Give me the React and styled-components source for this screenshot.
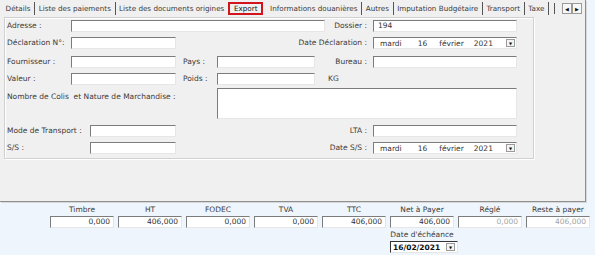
import React from "react";
import styled, { createGlobalStyle } from "styled-components";

const GlobalStyle = createGlobalStyle`
  html, body {
    margin: 0;
    padding: 0;
    background: #eef5fc;
  }
  body {
    font-family: "DejaVu Sans", Verdana, sans-serif;
    font-size: 7.5px;
    color: #3d3a38;
    width: 595px;
    height: 255px;
    overflow: hidden;
  }
`;

const Page = styled.div`
  width: 595px;
  height: 255px;
`;

const Panel = styled.div`
  width: 586px;
  height: 202px;
  box-sizing: border-box;
  background: #f0f0f0;
  border-right: 1px solid #8f8f8f;
  border-bottom: 1px solid #8f8f8f;
  box-shadow: 1px 1px 0 #d8d8d8;
`;

const TabStrip = styled.div`
  display: flex;
  align-items: center;
  height: 17px;
  padding-left: 2px;
  padding-bottom: 1px;
  box-sizing: border-box;
  white-space: nowrap;
  font-size: 7.2px;
`;

const Tab = styled.div`
  flex-shrink: 0;
  height: 13px;
  line-height: ${(p) => (p.$active ? "9px" : "13px")};
  padding: 0 ${(p) => (p.$active ? "4px" : "3.6px")};
  box-sizing: border-box;
  border: ${(p) => (p.$active ? "2px solid #d4141c" : "none")};
  border-right: ${(p) => (p.$active ? "2px solid #d4141c" : p.$last ? "none" : "1px solid #555")};
  margin-right: ${(p) => (p.$active ? "3px" : "0")};
  color: ${(p) => (p.$active ? "#111" : "#3d3a38")};
`;

const Spacer = styled.div`
  flex: 1;
`;

const ArrowGroup = styled.div`
  flex-shrink: 0;
  display: flex;
  align-items: center;
  margin-right: 3px;
  margin-top: 1px;
`;

const CutTab = styled.div`
  width: 6px;
  height: 11px;
  border-left: 1px solid #555;
  margin-right: 1px;
`;

const ArrowBtn = styled.div`
  width: 10px;
  height: 11px;
  box-sizing: border-box;
  border: 1px solid #9a9a9a;
  background: #f7f7f7;
  display: flex;
  align-items: center;
  justify-content: center;
  font-size: 5px;
  color: #111;
`;

const GroupBox = styled.div`
  margin-left: 4px;
  width: 530px;
  height: 142px;
  box-sizing: border-box;
  border: 1px solid #d0d0d0;
  box-shadow: inset 1px 1px 0 #fff, 1px 1px 0 #fff;
  padding: 2px 0 0 2px;
`;

const FormGrid = styled.div`
  display: grid;
  grid-template-columns: 64px 105px 41px 98px 58px 144px;
  grid-template-rows: 17px 19px 17px 15px 37px 17px 12px;
  align-items: start;
`;

const Label = styled.div`
  height: 12px;
  line-height: 12px;
  white-space: nowrap;
  text-align: ${(p) => (p.$right ? "right" : "left")};
  padding-left: ${(p) => p.$pl || 0}px;
  padding-right: ${(p) => (p.$right ? 6 : 0)}px;
  margin-top: ${(p) => p.$mt || 0}px;
  grid-column: ${(p) => p.$col || "auto"};
`;

const Field = styled.div`
  height: ${(p) => p.$h || 12}px;
  width: ${(p) => (p.$w ? `${p.$w}px` : "auto")};
  justify-self: ${(p) => p.$justify || "stretch"};
  box-sizing: border-box;
  background: #fff;
  border-top: 1px solid #7c7c7c;
  border-left: 1px solid #7c7c7c;
  border-right: 1px solid #e6e6e6;
  border-bottom: 1px solid #e6e6e6;
  line-height: 10px;
  padding-left: 4px;
  grid-column: ${(p) => p.$col || "auto"};
  color: #333;
`;

const DateBox = styled.div`
  height: 12px;
  box-sizing: border-box;
  background: #fff;
  border-top: 1px solid #7c7c7c;
  border-left: 1px solid #7c7c7c;
  border-right: 1px solid #e6e6e6;
  border-bottom: 1px solid #e6e6e6;
  display: flex;
  align-items: center;
  padding-left: 6px;
  padding-right: 1px;
  color: #333;
  grid-column: ${(p) => p.$col || "auto"};
`;

const DatePart = styled.span`
  margin-right: ${(p) => p.$gap}px;
`;

const DropBtn = styled.div`
  margin-left: auto;
  width: 9px;
  height: 8px;
  box-sizing: border-box;
  border: 1px solid #9a9a9a;
  background: #f4f4f4;
  display: flex;
  align-items: center;
  justify-content: center;
  font-size: 4px;
  color: #111;
`;

const Summary = styled.div`
  display: grid;
  grid-template-columns: repeat(8, 64px);
  grid-template-rows: 10px 12px 11px 12px;
  column-gap: 4px;
  row-gap: 1px;
  padding-left: 50px;
  margin-top: 3px;
`;

const SumLabel = styled.div`
  text-align: center;
  line-height: 10px;
  white-space: nowrap;
  align-self: end;
  grid-column: ${(p) => p.$col || "auto"};
`;

const Amount = styled.div`
  height: 12px;
  box-sizing: border-box;
  background: #fff;
  border-top: 1px solid #7c7c7c;
  border-left: 1px solid #7c7c7c;
  border-right: 1px solid #e6e6e6;
  border-bottom: 1px solid #e6e6e6;
  text-align: right;
  line-height: 10px;
  padding-right: 3px;
  color: ${(p) => (p.$disabled ? "#a3a3a3" : "#333")};
`;

const DueDate = styled.div`
  grid-column: 6;
  width: 68px;
  height: 12px;
  box-sizing: border-box;
  background: #fff;
  border-top: 1px solid #333;
  border-left: 1px solid #333;
  border-right: 1px solid #e6e6e6;
  border-bottom: 1px solid #e6e6e6;
  display: flex;
  align-items: center;
  padding-left: 2px;
  padding-right: 2px;
  font-weight: bold;
  color: #111;
`;

const DateValue = ({ col }) => (
  <DateBox $col={col}>
    <DatePart $gap={16}>mardi</DatePart>
    <DatePart $gap={12}>16</DatePart>
    <DatePart $gap={10}>février</DatePart>
    <DatePart $gap={0}>2021</DatePart>
    <DropBtn>▼</DropBtn>
  </DateBox>
);

const tabs = [
  "Détails",
  "Liste des paiements",
  "Liste des documents origines",
  "Export",
  "Informations douanières",
  "Autres",
  "Imputation Budgétaire",
  "Transport",
  "Taxe",
];

const totals = [
  ["Timbre", "0,000"],
  ["HT", "406,000"],
  ["FODEC", "0,000"],
  ["TVA", "0,000"],
  ["TTC", "406,000"],
  ["Net à Payer", "406,000"],
  ["Réglé", "0,000", true],
  ["Reste à payer", "406,000", true],
];

export default function App() {
  return (
    <Page>
      <GlobalStyle />
      <Panel>
        <TabStrip>
          {tabs.map((t, i) => (
            <Tab key={t} $active={t === "Export"} $last={tabs[i + 1] === "Export"}>
              {t}
            </Tab>
          ))}
          <Spacer />
          <ArrowGroup>
            <CutTab />
            <ArrowBtn>◀</ArrowBtn>
            <ArrowBtn>▶</ArrowBtn>
          </ArrowGroup>
        </TabStrip>
        <GroupBox>
          <FormGrid>
            <Label>Adresse :</Label>
            <Field $col="2 / 5" $w={254} $justify="start" />
            <Label $right $col="5">Dossier :</Label>
            <Field $col="6">194</Field>

            <Label>Déclaration N°:</Label>
            <Field />
            <Label $right $col="4 / 6">Date Déclaration :</Label>
            <DateValue col="6" />

            <Label>Fournisseur :</Label>
            <Field />
            <Label $pl={7}>Pays :</Label>
            <Field />
            <Label $right>Bureau :</Label>
            <Field />

            <Label>Valeur :</Label>
            <Field />
            <Label $pl={7}>Poids :</Label>
            <Field />
            <Label $pl={13}>KG</Label>
            <div />

            <Label $col="1 / 4" $mt={3}>Nombre de Colis&nbsp; et Nature de Marchandise :</Label>
            <Field $col="4 / 7" $h={31} />

            <Label>Mode de Transport :</Label>
            <Field $w={86} $justify="end" />
            <Label $right $col="5">LTA :</Label>
            <Field $col="6" />

            <Label>S/S :</Label>
            <Field $w={86} $justify="end" />
            <Label $right $col="5">Date S/S :</Label>
            <DateValue col="6" />
          </FormGrid>
        </GroupBox>
      </Panel>
      <Summary>
        {totals.map(([label]) => (
          <SumLabel key={label}>{label}</SumLabel>
        ))}
        {totals.map(([label, value, disabled]) => (
          <Amount key={label} $disabled={disabled}>
            {value}
          </Amount>
        ))}
        <SumLabel $col="6">Date d'échéance</SumLabel>
        <DueDate>
          <span>16/02/2021</span>
          <DropBtn>▼</DropBtn>
        </DueDate>
      </Summary>
    </Page>
  );
}
